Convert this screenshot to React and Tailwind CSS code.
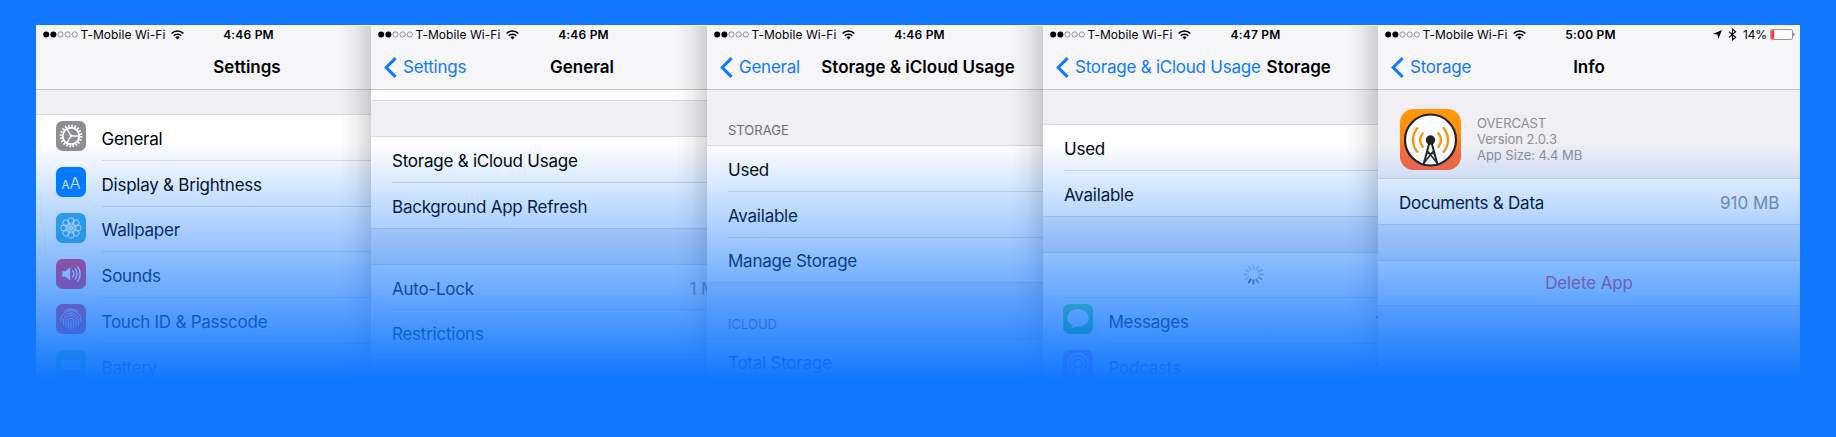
import React from 'react';

/* ---------- status bar glyphs ---------- */

function SignalDots() {
  return (
    <svg className="h-[7px] w-[36px] shrink-0" viewBox="0 0 36 7">
      {[0, 1, 2, 3, 4].map((i) =>
        i < 2 ? (
          <circle key={i} cx={3.2 + i * 7.15} cy="3.5" r="3" fill="#000" />
        ) : (
          <circle key={i} cx={3.2 + i * 7.15} cy="3.5" r="2.6" fill="none" stroke="#6f6f72" strokeWidth="0.7" />
        )
      )}
    </svg>
  );
}

function Wifi() {
  return (
    <svg className="h-[10px] w-[13px] shrink-0" viewBox="0 0 13 10" fill="none" stroke="#000" strokeWidth="1.6">
      <path d="M0.6 3.5a8.3 8.3 0 0 1 11.8 0" />
      <path d="M2.7 5.8a5.4 5.4 0 0 1 7.6 0" />
      <path d="M6.5 9.6 4.4 7.4a3 3 0 0 1 4.2 0z" fill="#000" stroke="none" />
    </svg>
  );
}

function LocationArrow() {
  return (
    <svg className="h-[9px] w-[9px]" viewBox="0 0 9 9" fill="#000">
      <path d="M9 0 5.2 9 4.6 4.5 0 4z" />
    </svg>
  );
}

function Bluetooth() {
  return (
    <svg className="h-[13px] w-[9px]" viewBox="0 0 9 13" fill="none" stroke="#000" strokeWidth="1.1">
      <path d="M1 3.6 7.6 9.3 4.5 12V1l3.1 2.7L1 9.4" />
    </svg>
  );
}

function BatteryLevel() {
  return (
    <svg className="h-[11px] w-[25px]" viewBox="0 0 25 11">
      <rect x="0.5" y="0.5" width="22" height="10" rx="1.6" fill="#fbfbfc" stroke="#8a8a8e" strokeWidth="0.9" />
      <rect x="1.2" y="1.2" width="3" height="8.6" fill="#ff3b30" />
      <path d="M23.4 3.8c1.4.3 1.4 3.1 0 3.4z" fill="#555" />
    </svg>
  );
}

/* ---------- app icons ---------- */

function Tile({ className, children }) {
  return (
    <div className={`mb-[3px] flex h-[30px] w-[30px] shrink-0 items-center justify-center overflow-hidden rounded-[6.5px] ${className}`}>
      {children}
    </div>
  );
}

function GearIcon() {
  return (
    <Tile className="bg-[#8e8e93]">
      <svg className="h-[30px] w-[30px]" viewBox="0 0 30 30" fill="none" stroke="#fff">
        <circle cx="15" cy="15" r="8.3" strokeWidth="1.9" />
        <circle cx="15" cy="15" r="10.1" strokeWidth="2.5" strokeDasharray="1.5 1.673" />
        <path d="M15 15h8M15 15l-4-6.9M15 15l-4 6.9" strokeWidth="1.3" />
        <circle cx="15" cy="15" r="1.4" fill="#fff" stroke="none" />
      </svg>
    </Tile>
  );
}

function DisplayIcon() {
  return (
    <Tile className="bg-[#007aff]">
      <div className="mt-[2px] flex items-baseline leading-none text-white">
        <span className="text-[11.5px]">A</span>
        <span className="text-[16.5px] font-light">A</span>
      </div>
    </Tile>
  );
}

function WallpaperIcon() {
  const petals = [0, 45, 90, 135, 180, 225, 270, 315];
  return (
    <Tile className="bg-[#37abda]">
      <svg className="h-[30px] w-[30px]" viewBox="0 0 30 30" fill="none" stroke="#fff" strokeWidth="0.9">
        {petals.map((a) => (
          <g key={a} transform={`rotate(${a} 15 15)`}>
            <circle cx="15" cy="8" r="3.2" />
            <ellipse cx="15" cy="11.8" rx="1.5" ry="2.2" strokeWidth="0.6" />
          </g>
        ))}
        <circle cx="15" cy="15" r="1.6" />
      </svg>
    </Tile>
  );
}

function SoundsIcon() {
  return (
    <Tile className="bg-[#fb2d55]">
      <svg className="h-[30px] w-[30px]" viewBox="0 0 30 30" fill="none" stroke="#fff" strokeWidth="1.4">
        <path d="M6.3 12.2h3.2l4.7-3.6v12.8l-4.7-3.6H6.3z" fill="#fff" stroke="none" />
        <path d="M16.4 11.5a5.4 5.4 0 0 1 0 7M18.9 9.4a8.6 8.6 0 0 1 0 11.2M21.4 7.4a12 12 0 0 1 0 15.2" />
      </svg>
    </Tile>
  );
}

function FingerprintIcon() {
  return (
    <Tile className="bg-[#fb2d55]">
      <svg className="h-[30px] w-[30px]" viewBox="0 0 30 30" fill="none" stroke="#fff" strokeWidth="0.85" strokeLinecap="round">
        <path d="M8.5 7a10.4 10.4 0 0 1 13 0" />
        <path d="M5 17.5v-1.8a10 9.2 0 0 1 20 0v1.800" />
        <path d="M7.500 21v-4.800a7.500 7.200 0 0 1 15 0V21" />
        <path d="M10 23.200v-6.700a5 5.200 0 0 1 10 0v6.700" />
        <path d="M12.500 24.500v-7.500a2.500 3 0 0 1 5 0v7.500" />
        <path d="M15 17v8" />
      </svg>
    </Tile>
  );
}

function BatteryIcon() {
  return (
    <Tile className="bg-[#4cd964]">
      <svg className="h-[30px] w-[30px]" viewBox="0 0 30 30" fill="#fff">
        <rect x="5.3" y="10.4" width="18.4" height="9.4" rx="1.8" />
        <path d="M24.4 13.4c1.3.4 1.3 3 0 3.4z" />
      </svg>
    </Tile>
  );
}

function MessagesIcon() {
  return (
    <Tile className="bg-gradient-to-b from-[#5ff06f] to-[#12c92b]">
      <svg className="h-[30px] w-[30px]" viewBox="0 0 30 30" fill="#fff">
        <ellipse cx="15" cy="13.8" rx="10.8" ry="8.9" />
        <path d="M10 20.5c0 1.6-.8 2.7-2 3.5 2.2 0 4-.8 5-2z" />
      </svg>
    </Tile>
  );
}

function PodcastsIcon() {
  return (
    <Tile className="bg-gradient-to-b from-[#d873f8] to-[#8a2be0]">
      <svg className="h-[30px] w-[30px]" viewBox="0 0 30 30" fill="none" stroke="#fff" strokeWidth="1.4">
        <path d="M10.6 22.7a10 10 0 1 1 8.8 0" />
        <path d="M11 18.6a6.4 6.4 0 1 1 8 0" />
        <circle cx="15" cy="13.4" r="2.9" fill="#fff" stroke="none" />
        <path d="M12.3 18.8q2.7-2 5.4 0l-1 7q-1.7 1.2-3.4 0z" fill="#fff" stroke="none" />
      </svg>
    </Tile>
  );
}

function OvercastIcon() {
  return (
    <svg className="h-[61px] w-[61px] shrink-0" viewBox="0 0 61 61" fill="none">
      <defs>
        <linearGradient id="overcast" x1="0" y1="0" x2="0" y2="1">
          <stop offset="0" stopColor="#ff9908" />
          <stop offset="0.45" stopColor="#fd8a14" />
          <stop offset="0.7" stopColor="#fb6c35" />
          <stop offset="1" stopColor="#ff6238" />
        </linearGradient>
        <clipPath id="overcast-disc">
          <circle cx="30.5" cy="31" r="25.5" />
        </clipPath>
      </defs>
      <rect width="61" height="61" rx="13.5" fill="url(#overcast)" />
      <circle cx="30.5" cy="31" r="25.5" fill="#fff" />
      <g stroke="#fc9410" strokeWidth="2.4" strokeLinecap="round">
        <path d="M22.6 24.2a10.5 10.5 0 0 0 0 13.6M38.4 24.2a10.5 10.5 0 0 1 0 13.6" />
        <path d="M17.4 19.2a18 18 0 0 0 0 23.6M43.6 19.2a18 18 0 0 1 0 23.6" />
      </g>
      <g clipPath="url(#overcast-disc)" stroke="#222" strokeWidth="2">
        <path d="M29.6 33 23.4 56M31.4 33l6.2 23" />
        <path d="M28 42.5 37 54M33 42.5 24 54M27.3 44.5 33.7 44.5" strokeWidth="1.5" />
      </g>
      <circle cx="30.5" cy="31" r="4.7" fill="#222" />
      <circle cx="30.5" cy="31" r="25.5" stroke="#222" strokeWidth="2.2" />
    </svg>
  );
}

function Spinner() {
  const shades = [0.22, 0.24, 0.27, 0.32, 0.4, 0.5, 0.75, 0.85, 0.2, 0.18, 0.18, 0.2];
  return (
    <svg className="h-[21px] w-[21px]" viewBox="0 0 21 21" stroke="#2a2a30" strokeWidth="1.8" strokeLinecap="round">
      {shades.map((o, i) => (
        <path key={i} d="M10.5 1.2v3.6" opacity={o} transform={`rotate(${i * 30} 10.5 10.5)`} />
      ))}
    </svg>
  );
}

/* ---------- screen structure ---------- */

function StatusBar({ time, right }) {
  return (
    <div className="grid h-[18px] grid-cols-[1fr_auto_1fr] items-center pt-px pl-[7px] text-[12px] leading-none text-black">
      <div className="flex items-center">
        <SignalDots />
        <span className="ml-[1.5px] tracking-[0.05px]">T-Mobile Wi-Fi</span>
        <span className="ml-[6px]"><Wifi /></span>
      </div>
      <span className="mr-[4px] font-semibold tracking-[0.2px]">{time}</span>
      <div className="flex items-center justify-end pr-[5px]">{right}</div>
    </div>
  );
}

function NavBar({ back, title }) {
  return (
    <div className="grid h-[46px] grid-cols-[1fr_auto_1fr] items-center pt-[2px] text-[17px] leading-none">
      <div className="flex items-center whitespace-nowrap pr-[6px] pl-[13px] text-[#0f7aff]">
        {back && (
          <>
            <svg className="mr-[6px] h-[21px] w-[13px]" viewBox="0 0 13 21" fill="none" stroke="#0f7aff" strokeWidth="3">
              <path d="M11.6 1.1 2.2 10.5l9.4 9.4" />
            </svg>
            <span className="tracking-[-0.24px]">{back}</span>
          </>
        )}
      </div>
      <h2 className="whitespace-nowrap font-semibold text-black">{title}</h2>
      <div />
    </div>
  );
}

function Screen({ width, time, right, back, title, shaded = true, children }) {
  return (
    <section className={`relative h-full shrink-0 overflow-hidden bg-[#efeff4] ${width}`}>
      <div className="w-[422px]">
        <header className="h-[65px] border-b border-[#c6c6ca] bg-[#f6f6f8]">
          <StatusBar time={time} right={right} />
          <NavBar back={back} title={title} />
        </header>
        {children}
      </div>
      {shaded && (
        <div className="absolute top-px right-0 bottom-0 w-[32px] bg-gradient-to-r from-transparent via-black/[0.05] to-black/[0.16]" />
      )}
    </section>
  );
}

function Gap({ className, children }) {
  return <div className={`border-b border-[#dadadf] bg-[#efeff4] ${className}`}>{children}</div>;
}

function Caption({ className, children }) {
  return (
    <Gap className={`flex items-end pl-[21px] text-[13px] leading-none text-[#6d6d72] ${className}`}>{children}</Gap>
  );
}

/* One table cell; the separator is inset unless the cell closes its group. */
function Row({ icon, label, value, last, inset = 'pl-[21px]', height = 'h-[45.75px]' }) {
  return (
    <div className={`flex bg-white text-[17px] leading-none ${inset} ${height} ${last ? 'border-b border-[#dadadf]' : ''}`}>
      {icon && <div className="flex w-[45.5px] shrink-0 items-center">{icon}</div>}
      <div className={`flex flex-1 items-center justify-between pt-[4px] ${last ? '' : 'border-b border-[#dedee2]'}`}>
        <span className="tracking-[-0.24px] text-black">{label}</span>
        {value}
      </div>
    </div>
  );
}

export default function App() {
  return (
    <main className="h-[437px] w-[1836px] bg-[#1177ff] px-[36px] pt-[25px] font-['Inter',sans-serif]">
      <div className="relative flex h-[357px] overflow-hidden">
        <Screen width="w-[335px]" time="4:46 PM" title="Settings">
          <Gap className="h-[25px]" />
          <Row inset="pl-[20px]" icon={<GearIcon />} label="General" />
          <Row inset="pl-[20px]" icon={<DisplayIcon />} label="Display & Brightness" />
          <Row inset="pl-[20px]" icon={<WallpaperIcon />} label="Wallpaper" />
          <Row inset="pl-[20px]" icon={<SoundsIcon />} label="Sounds" />
          <Row inset="pl-[20px]" icon={<FingerprintIcon />} label="Touch ID & Passcode" />
          <Row inset="pl-[20px]" icon={<BatteryIcon />} label="Battery" />
        </Screen>

        <Screen width="w-[336px]" time="4:46 PM" back="Settings" title="General">
          <div className="h-[11px] border-b border-[#dadadf] bg-white" />
          <Gap className="h-[36px]" />
          <Row label="Storage & iCloud Usage" />
          <Row label="Background App Refresh" last />
          <Gap className="h-[36.5px]" />
          <Row label="Auto-Lock" height="h-[45px]" value={<span className="mr-[37px] text-[#8e8e93]">1 Minute</span>} />
          <Row label="Restrictions" height="h-[45px]" last />
        </Screen>

        <Screen width="w-[336px]" time="4:46 PM" back="General" title="Storage & iCloud Usage">
          <Caption className="h-[56px] pb-[8px]">STORAGE</Caption>
          <Row label="Used" />
          <Row label="Available" />
          <Row label="Manage Storage" height="h-[45px]" last />
          <Caption className="h-[57px] pb-[8px]">ICLOUD</Caption>
          <Row label="Total Storage" />
        </Screen>

        <Screen width="w-[335px]" time="4:47 PM" back="Storage & iCloud Usage" title="Storage">
          <Gap className="h-[35px]" />
          <Row label="Used" />
          <Row label="Available" last />
          <Gap className="h-[36px]" />
          <div className="h-[45.5px] bg-white pl-[20px]">
            <div className="flex h-full items-center justify-center border-b border-[#dedee2] pr-[21px]">
              <Spinner />
            </div>
          </div>
          <Row inset="pl-[20px]" icon={<MessagesIcon />} label="Messages" value={<span className="w-[89.5px] text-[#55555c]">1</span>} />
          <Row inset="pl-[20px]" icon={<PodcastsIcon />} label="Podcasts" value={<span className="w-[89.5px] text-[#55555c]">1</span>} />
        </Screen>

        <Screen
          width="w-[422px]"
          time="5:00 PM"
          back="Storage"
          title="Info"
          shaded={false}
          right={
            <>
              <LocationArrow />
              <span className="ml-[6px]"><Bluetooth /></span>
              <span className="mr-[3px] ml-[6px] tracking-[-0.1px]">14%</span>
              <BatteryLevel />
            </>
          }
        >
          <Gap className="flex h-[89px] gap-[16px] pt-[19px] pl-[22px]">
            <OvercastIcon />
            <div className="pt-[6px] text-[13px] leading-[16px] tracking-[-0.05px] text-[#8e8e93]">
              <p>OVERCAST</p>
              <p>Version 2.0.3</p>
              <p>App Size: 4.4 MB</p>
            </div>
          </Gap>
          <Row
            label="Documents & Data"
            inset="pl-[21px]"
            last
            value={<span className="mr-[20.5px] text-[#8e8e93]">910 MB</span>}
          />
          <Gap className="h-[36.5px]" />
          <div className="flex h-[44.5px] items-center justify-center border-b border-[#dadadf] bg-white pt-[2px] text-[17px] tracking-[-0.12px] text-[#ff3b30]">
            Delete App
          </div>
        </Screen>

        {/* fade of all the screens into the page colour */}
        <div className="pointer-events-none absolute inset-0 bg-[linear-gradient(to_bottom,rgba(17,119,255,0)_119px,rgba(17,119,255,1)_355px)]" />
      </div>
    </main>
  );
}
